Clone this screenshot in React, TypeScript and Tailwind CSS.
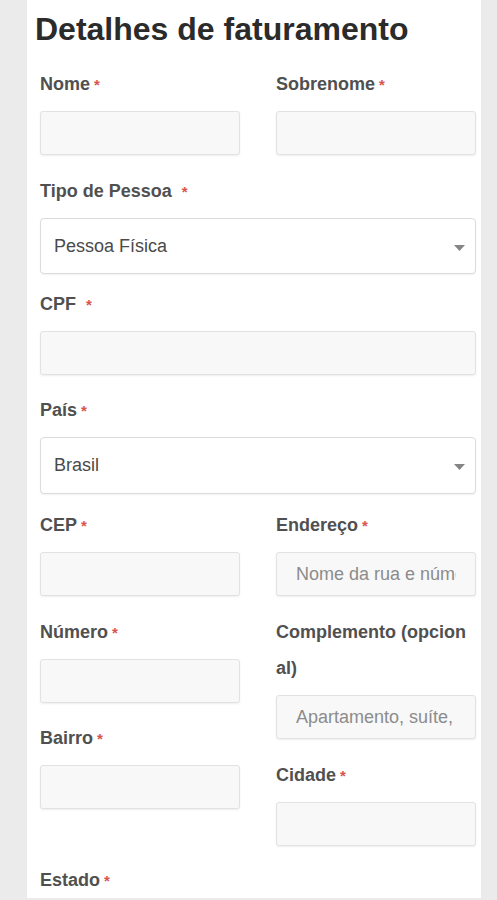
import React from "react";

const font = { fontFamily: '"Liberation Sans", Arial, sans-serif' };

function Star({ wide }: { wide?: boolean }) {
  return (
    <span className={`${wide ? "ml-[10px]" : "ml-[4px]"} text-[15px] leading-none text-[#d9534f]`}>*</span>
  );
}

function Label({
  text,
  wide,
  required = true,
  extra = "",
}: {
  text: string;
  wide?: boolean;
  required?: boolean;
  extra?: string;
}) {
  return (
    <label className={`block text-[18px] font-bold leading-[36px] text-[#505050] [word-break:break-all] mb-[9px] ${extra}`}>
      {text}
      {required && <Star wide={wide} />}
    </label>
  );
}

function TextInput({ placeholder, mb = "mb-[18px]" }: { placeholder?: string; mb?: string }) {
  return (
    <input
      type="text"
      placeholder={placeholder}
      className={`block w-full h-[44px] ${mb} rounded-[3px] border border-[#e2e2e2] bg-[#f8f8f8] px-[19px] text-[18px] text-[#444] placeholder:text-[#8c8c8c] shadow-[0_1px_2px_rgba(0,0,0,0.07)] outline-none`}
      style={font}
    />
  );
}

function Select({ value, h = "h-[56px]", mb = "mb-[12px]" }: { value: string; h?: string; mb?: string }) {
  return (
    <div
      className={`flex w-full ${h} ${mb} items-center justify-between rounded-[4px] border border-[#dcdcdc] bg-white pl-[13px] pr-[10px] shadow-[0_1px_2px_rgba(0,0,0,0.06)]`}
    >
      <span className="text-[18px] text-[#4a4a4a]">{value}</span>
      <svg width="11" height="6" viewBox="0 0 11 6" className="mt-[3px]">
        <path d="M0 0 L11 0 L5.5 6 Z" fill="#858585" />
      </svg>
    </div>
  );
}

export default function App() {
  return (
    <div className="h-[900px] w-full overflow-hidden bg-[#ebebeb] pl-[27px]" style={font}>
      <div className="h-[898px] w-[454px] overflow-hidden bg-white pl-[13px] pr-[5px] pt-[10px]">
        <h3 className="ml-[-5px] mb-[18px] text-[32px] font-bold leading-[38px] text-[#2b2b2b]">
          Detalhes de faturamento
        </h3>

        <div className="grid grid-cols-[200px_200px] gap-x-[36px]">
          <div>
            <Label text="Nome" />
            <TextInput />
          </div>
          <div>
            <Label text="Sobrenome" />
            <TextInput />
          </div>
        </div>

        <Label text="Tipo de Pessoa" wide />
        <Select value="Pessoa Física" />

        <Label text="CPF" wide />
        <TextInput mb="mb-[17px]" />

        <Label text="País" />
        <Select value="Brasil" h="h-[57px]" mb="mb-[13px]" />

        <div className="grid grid-cols-[200px_200px] items-start gap-x-[36px]">
          <div>
            <Label text="CEP" />
            <TextInput />
            <Label text="Número" />
            <TextInput mb="mb-[17px]" />
            <Label text="Bairro" />
            <TextInput />
          </div>
          <div>
            <Label text="Endereço" />
            <TextInput placeholder="Nome da rua e número" />
            <Label text="Complemento (opcional)" required={false} extra="pr-[4px]" />
            <TextInput placeholder="Apartamento, suíte, unidade, etc. (opcional)" />
            <Label text="Cidade" />
            <TextInput mb="mb-[16px]" />
          </div>
        </div>

        <Label text="Estado" />
      </div>
    </div>
  );
}
